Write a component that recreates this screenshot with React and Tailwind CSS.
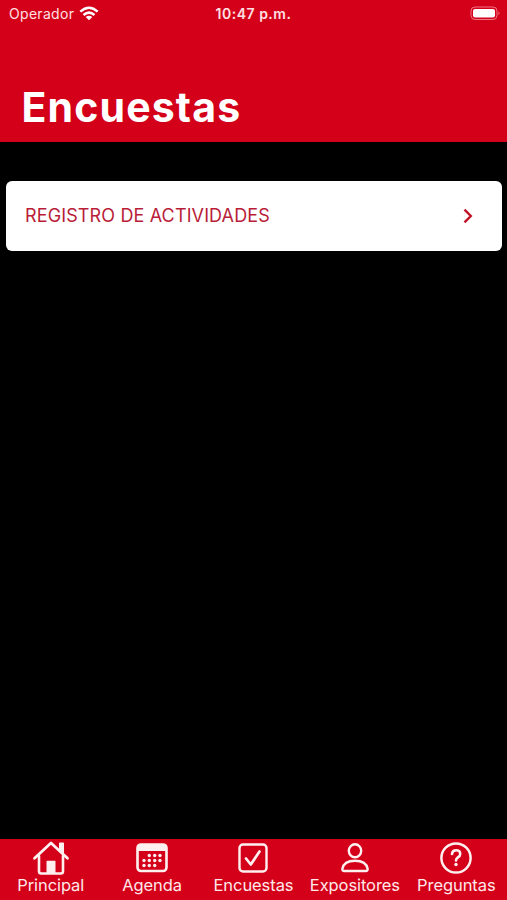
import React from 'react';

function HomeIcon() {
  return (
    <svg width="38" height="36" viewBox="0 0 38 36" fill="none" stroke="#fff0f0" strokeWidth="2.8" strokeLinecap="round" strokeLinejoin="round">
      <path d="M2.500 18.300 19 3 35.500 18.300" />
      <path d="M27.800 10.500V3.300h3.400v10.500z" fill="#fff0f0" strokeWidth="1.600" />
      <path d="M7 16v15.300q0 2.200 2.200 2.200h19.600q2.200 0 2.200-2.200V16" strokeWidth="2.600" />
      <path d="M15.200 21.500h7.600v11.500h-7.600z" fill="#fff0f0" strokeWidth="1.400" />
    </svg>
  );
}

const DOTS = [[13.300, 12.500], [18.700, 12.500], [24, 12.500], [8, 17.500], [13.300, 17.500], [18.700, 17.500], [24, 17.500], [8, 22.500], [13.300, 22.500], [18.700, 22.500]];

function CalendarIcon() {
  return (
    <svg width="32" height="30" viewBox="0 0 32 30" fill="none">
      <rect x="1.500" y="1.500" width="29" height="26.500" rx="3.500" stroke="#fff0f0" strokeWidth="2.600" />
      <path d="M1 4q0-3 3-3h24q3 0 3 3v4H1z" fill="#fff0f0" />
      {DOTS.map(([x, y]) => (
        <circle key={`${x}-${y}`} cx={x} cy={y} r="1.700" fill="#fff0f0" />
      ))}
    </svg>
  );
}

function CheckIcon() {
  return (
    <svg width="30" height="30" viewBox="0 0 30 30" fill="none" stroke="#fff0f0" strokeLinecap="round" strokeLinejoin="round">
      <rect x="1.500" y="1.500" width="27" height="27" rx="3.500" strokeWidth="2.400" />
      <path d="M8 15.500 12.800 21.500 21.500 8.500" strokeWidth="2.700" />
    </svg>
  );
}

function PersonIcon() {
  return (
    <svg width="28" height="30" viewBox="0 0 28 30" fill="none" stroke="#fff0f0" strokeWidth="2.400" strokeLinejoin="round">
      <ellipse cx="14" cy="7.800" rx="6.200" ry="6.500" />
      <path d="M3.300 28Q1.100 28 1.400 25.800C2.400 20.500 7.500 17.800 14 17.800s11.600 2.700 12.600 8q.3 2.200-1.900 2.200z" />
    </svg>
  );
}

function QuestionIcon() {
  return (
    <svg width="32" height="32" viewBox="0 0 32 32" fill="none" stroke="#fff0f0" strokeLinecap="round" strokeLinejoin="round">
      <circle cx="16" cy="16" r="14.600" strokeWidth="2.500" />
      <path d="M12 12c.2-2.500 1.800-3.700 4.100-3.700 2.400 0 4.100 1.400 4.100 3.600 0 1.700-.9 2.600-2.300 3.500-1.300.9-1.900 1.600-1.900 3.100" strokeWidth="2.600" />
      <circle cx="16" cy="22.500" r="1.700" fill="#fff0f0" stroke="none" />
    </svg>
  );
}

const TABS = [
  { label: 'Principal', Icon: HomeIcon },
  { label: 'Agenda', Icon: CalendarIcon },
  { label: 'Encuestas', Icon: CheckIcon },
  { label: 'Expositores', Icon: PersonIcon },
  { label: 'Preguntas', Icon: QuestionIcon },
];

function StatusBar() {
  return (
    <div className="grid h-[27px] grid-cols-3 items-center text-[14px] leading-none text-[#ffe0e2]">
      <div className="flex items-center gap-[5px] pl-[9px]">
        <span className="tracking-[0.3px]">Operador</span>
        <svg width="20" height="15" viewBox="0 0 20 15" fill="none" stroke="#ffffff" strokeWidth="2.500">
          <path d="M1.300 5.600Q10-2.200 18.700 5.600" />
          <path d="M4.500 9Q10 4.200 15.500 9" />
          <path d="m10 14.300-3.300-3.200Q10 8.400 13.300 11.100z" fill="#ffffff" stroke="none" />
        </svg>
      </div>
      <span className="text-center font-semibold tracking-[0.5px]">10:47 p.m.</span>
      <div className="flex justify-end pr-[6px]">
        <svg width="31" height="15" viewBox="0 0 31 15" fill="none">
          <rect x="1" y="1" width="26" height="12.500" rx="4" stroke="#ee7780" />
          <rect x="3" y="3" width="22" height="8.500" rx="2" fill="#ffffff" />
          <path d="M28.500 5.200q2 2 0 4z" fill="#ee7780" />
        </svg>
      </div>
    </div>
  );
}

export default function App() {
  return (
    <div className="flex h-[900px] w-full flex-col overflow-hidden bg-black font-['Inter','Liberation_Sans',sans-serif]">
      <header className="flex h-[142px] shrink-0 flex-col justify-between bg-[#d4001a]">
        <StatusBar />
        <h1 className="pb-[14px] pl-[21.500px] text-[41px] leading-[42px] font-bold tracking-[1.15px] text-white">Encuestas</h1>
      </header>
      <main className="flex-1 px-[5.500px] pt-[39px]">
        <button className="flex h-[70px] w-full items-center justify-between rounded-[6px] bg-white pr-[28px] pl-[19.500px] text-[#b91d38]">
          <span className="text-[18px] leading-none tracking-[0.13px]">REGISTRO DE ACTIVIDADES</span>
          <svg width="12" height="16" viewBox="0 0 12 16" fill="none" stroke="#c01428" strokeWidth="2.400">
            <path d="m2.500 1.700 6.300 6.300-6.300 6.300" />
          </svg>
        </button>
      </main>
      <nav className="grid h-[61px] shrink-0 grid-cols-5 bg-[#d4001a]">
        {TABS.map(({ label, Icon }) => (
          <div key={label} className="flex flex-col items-center">
            <div className="flex h-[38px] items-center justify-center">
              <Icon />
            </div>
            <span className="text-[16.500px] leading-[16px] tracking-[-0.08px] whitespace-nowrap text-[#ffe8e9]">{label}</span>
          </div>
        ))}
      </nav>
    </div>
  );
}
